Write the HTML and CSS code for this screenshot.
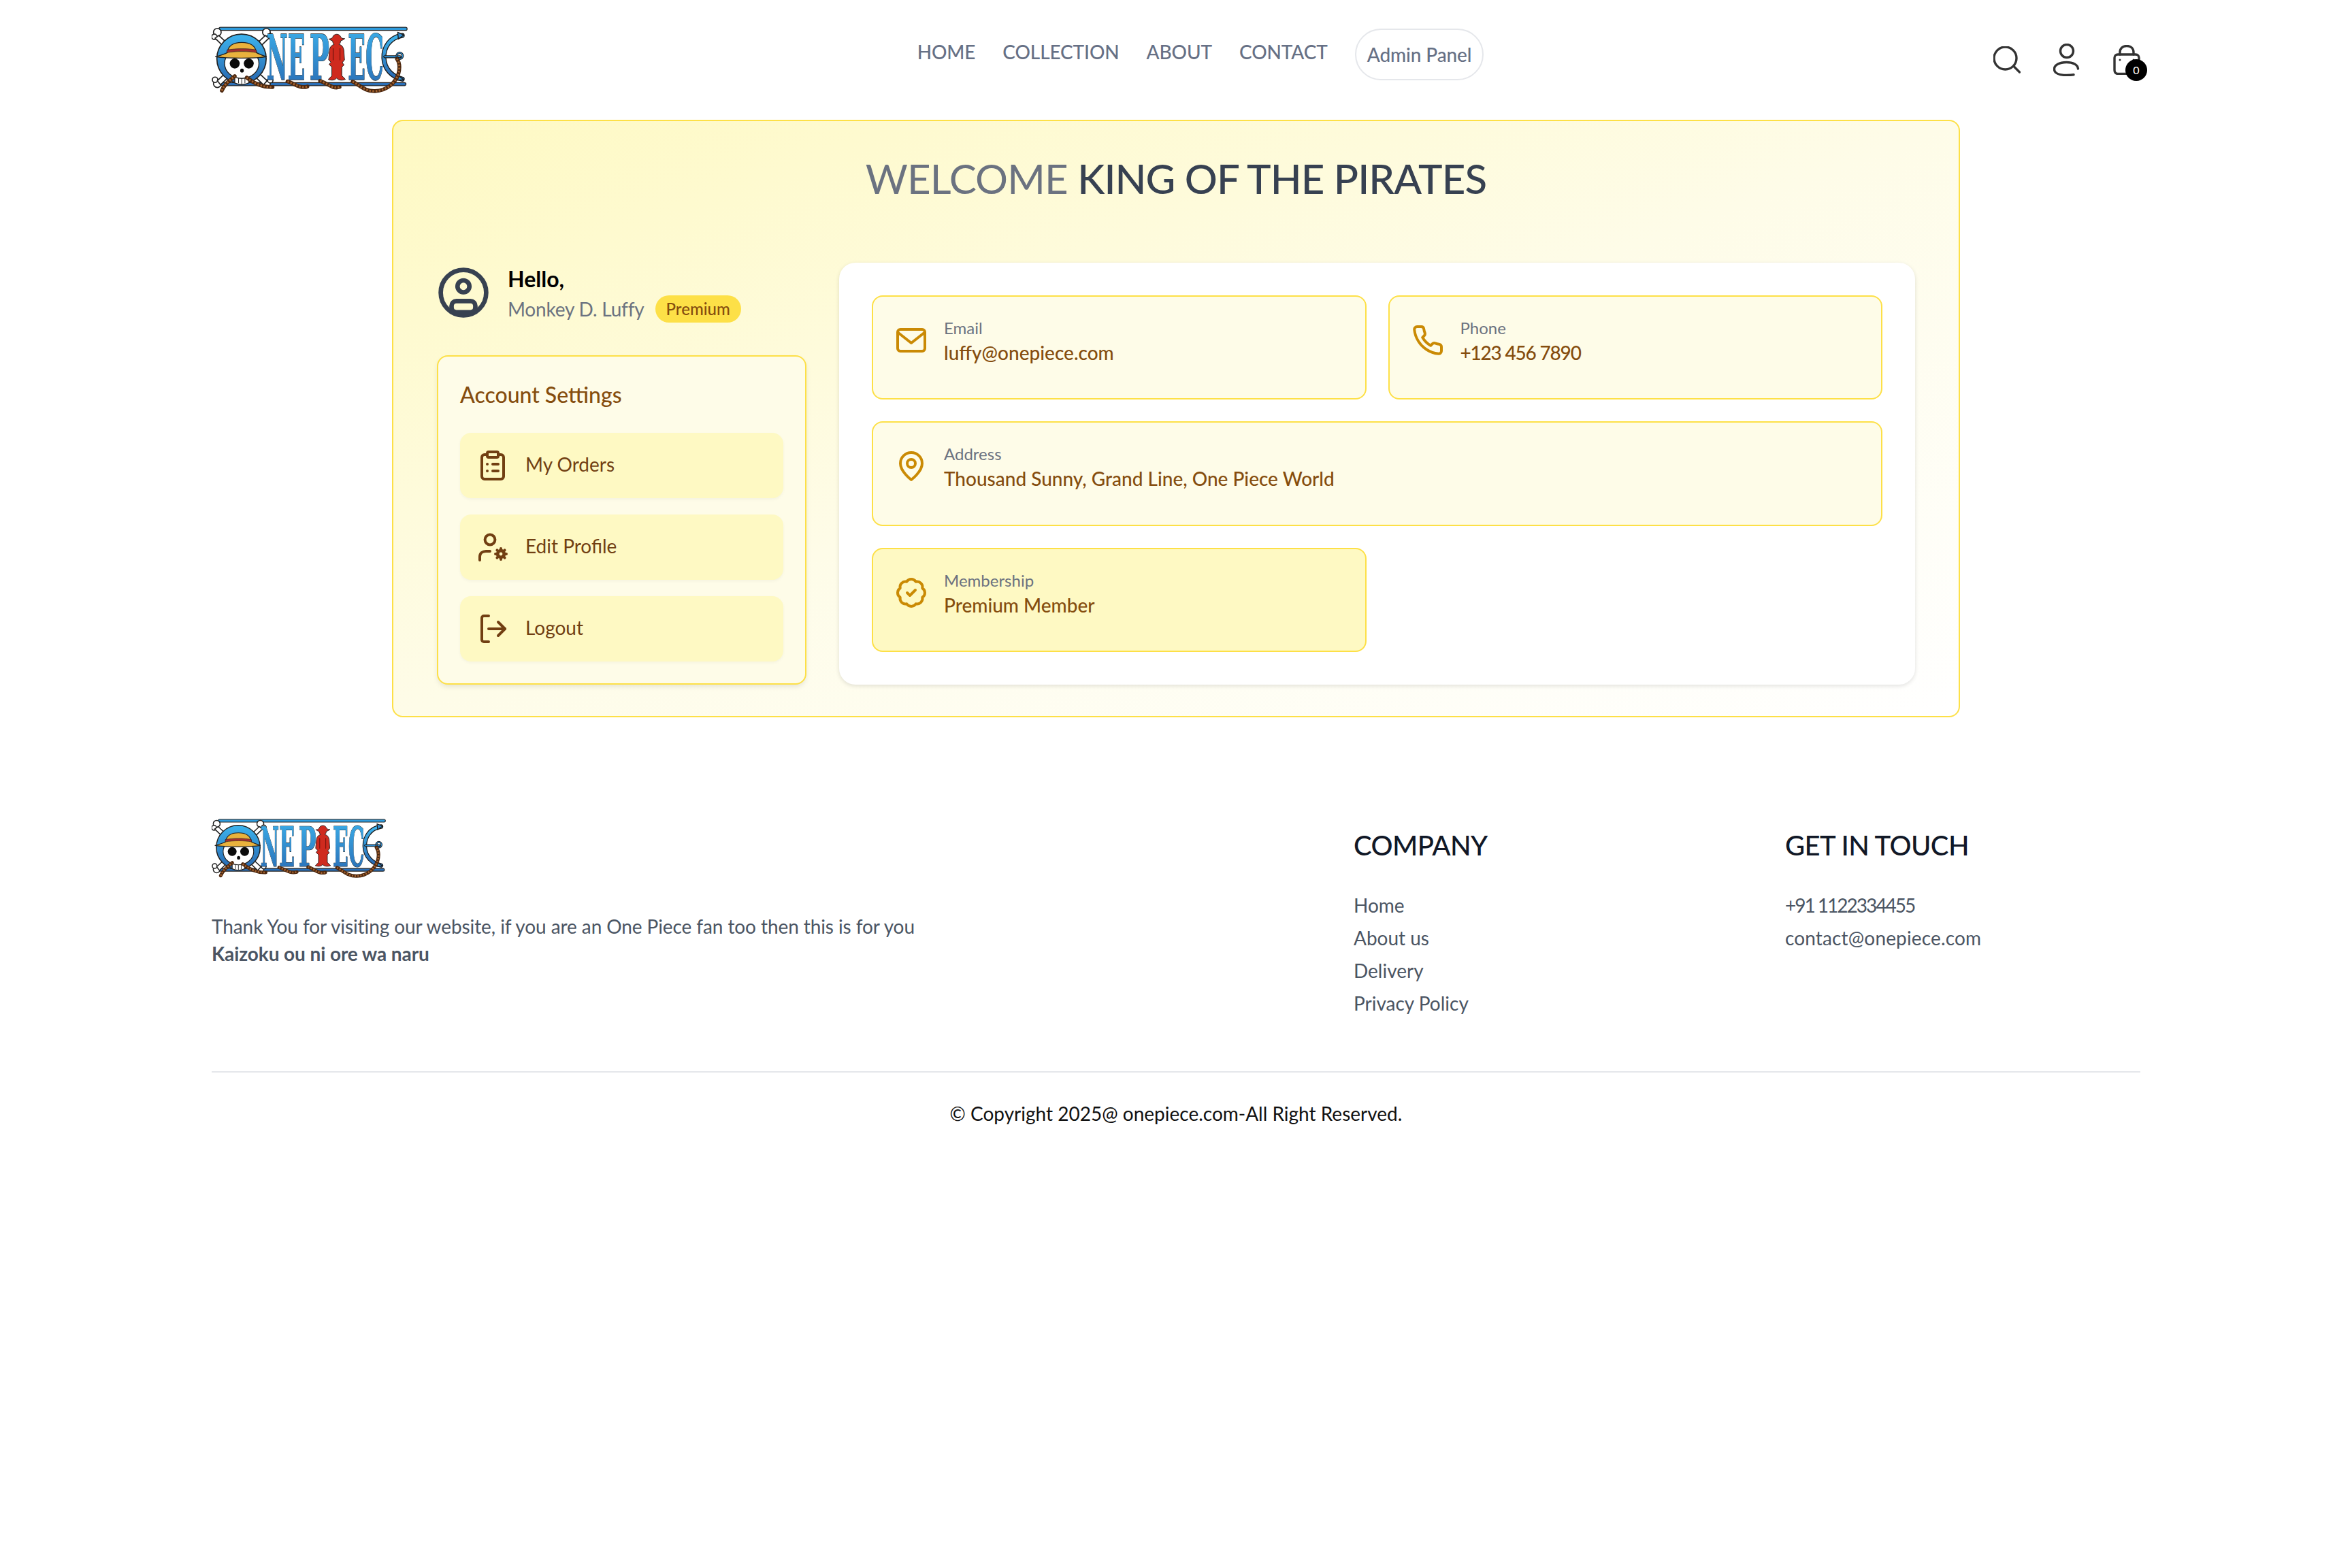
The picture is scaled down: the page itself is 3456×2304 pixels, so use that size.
FILE: index.html
```html
<!DOCTYPE html>
<html lang="en">
<head>
<meta charset="utf-8">
<title>One Piece</title>
<link rel="stylesheet" href="styles.css">
</head>
<body>
<svg class="defs" aria-hidden="true">
  <defs>
    <linearGradient id="blue" x1="0" y1="0" x2="0" y2="1"><stop offset="0" stop-color="#3db4ee"/><stop offset="1" stop-color="#2867b0"/></linearGradient>
    <symbol id="logo" viewBox="93 50 866 300">
      <g stroke-linecap="round" stroke-linejoin="round">
        <path d="M132 63H950" stroke="#222" stroke-width="17" fill="none"/>
        <path d="M132 63H950" stroke="#2f9bdc" stroke-width="10" fill="none"/>
        <path d="M138 307H945" stroke="#222" stroke-width="17" fill="none"/>
        <path d="M138 307H945" stroke="#2a6fb8" stroke-width="10" fill="none"/>
        <g fill="#fff" stroke="#222" stroke-width="5">
          <circle cx="118" cy="78" r="17"/><circle cx="105" cy="98" r="12"/>
          <circle cx="335" cy="78" r="17"/><circle cx="352" cy="96" r="12"/>
          <circle cx="118" cy="305" r="17"/><circle cx="108" cy="288" r="12"/>
          <circle cx="335" cy="305" r="17"/><circle cx="352" cy="290" r="12"/>
          <path d="M125 92 338 292 322 310 108 104Z"/>
          <path d="M330 92 118 292 132 310 346 104Z"/>
        </g>
        <circle cx="225" cy="195" r="109" fill="url(#blue)" stroke="#222" stroke-width="5"/>
        <path d="M195 272h62v30q-31 14-62 0Z" fill="#fff" stroke="#222" stroke-width="4"/>
        <path d="M212 276v26M226 276v30M240 276v26" stroke="#222" stroke-width="3" fill="none"/>
        <ellipse cx="226" cy="216" rx="76" ry="66" fill="#fff" stroke="#222" stroke-width="4"/>
        <circle cx="195" cy="216" r="22" fill="#0b0b0b"/>
        <circle cx="257" cy="216" r="22" fill="#0b0b0b"/>
        <ellipse cx="227" cy="247" rx="8" ry="9" fill="#0b0b0b"/>
        <path d="M162 168C166 135 188 123 226 123S286 135 291 168C305 176 320 181 335 186 290 194 160 194 110 186 128 181 148 176 162 168Z" fill="#e9b23d" stroke="#222" stroke-width="4"/>
        <path d="M162 156C200 149 255 149 290 156L292 168C255 161 200 161 161 168Z" fill="#a5302f" stroke="#222" stroke-width="2"/>
        <g font-family="'DejaVu Serif','Liberation Serif',serif" font-weight="700" font-size="274" fill="url(#blue)" stroke="#1a1a1a" stroke-width="4" paint-order="stroke">
          <text x="336" y="288" textLength="170" lengthAdjust="spacingAndGlyphs">NE</text>
          <text x="525" y="288" textLength="88" lengthAdjust="spacingAndGlyphs">P</text>
          <text x="695" y="288" textLength="158" lengthAdjust="spacingAndGlyphs">EC</text>
        </g>
        <path d="M612 108C622 106 628 104 630 94 640 84 652 84 661 94 664 104 670 106 681 106 674 112 668 114 663 116 662 124 660 128 656 132 668 134 674 142 677 156L680 200 670 212 678 222 668 232V270C674 276 680 280 684 286 670 292 650 290 645 280 640 290 622 292 608 286 614 280 620 276 624 270V232L612 220 620 210 610 200 614 156C616 142 624 134 634 132 630 128 628 122 627 116 622 114 616 112 612 108Z" fill="#cf2a1e" stroke="#222" stroke-width="3"/>
        <path d="M630 150V200M660 150V200" stroke="#7a1710" stroke-width="4" fill="none"/>
        <path d="M935 92C880 100 852 145 854 192 856 240 890 275 935 285" fill="none" stroke="#1a1a1a" stroke-width="22"/>
        <path d="M935 92C880 100 852 145 854 192 856 240 890 275 935 285" fill="none" stroke="url(#blue)" stroke-width="14"/>
        <path d="M915 78 942 90 918 108ZM918 270 942 288 915 290Z" fill="#2f8fd4" stroke="#1a1a1a" stroke-width="4"/>
        <path d="M858 186H925" stroke="#1a1a1a" stroke-width="13" fill="none"/>
        <path d="M858 186H925" stroke="#2f8fd4" stroke-width="6" fill="none"/>
        <circle cx="924" cy="182" r="13" fill="none" stroke="#1a1a1a" stroke-width="10"/>
        <circle cx="924" cy="182" r="13" fill="none" stroke="#2f8fd4" stroke-width="4"/>
        <g fill="none">
          <path d="M138 336C150 305 175 290 195 272M248 278C275 300 315 322 362 320M428 295C455 302 480 328 516 318M572 293C600 300 625 330 658 320M716 296C745 310 770 340 815 338 870 335 905 300 918 262 924 240 925 215 912 196" stroke="#4c2810" stroke-width="17"/>
          <path d="M138 336C150 305 175 290 195 272M248 278C275 300 315 322 362 320M428 295C455 302 480 328 516 318M572 293C600 300 625 330 658 320M716 296C745 310 770 340 815 338 870 335 905 300 918 262 924 240 925 215 912 196" stroke="#a4622e" stroke-width="9" stroke-dasharray="7 7" stroke-linecap="butt"/>
        </g>
      </g>
    </symbol>
  </defs>
</svg>

<div class="page">
  <header class="header">
    <svg class="logo-main"><use href="#logo"/></svg>
    <nav class="nav">
      <a class="nav-link">HOME</a>
      <a class="nav-link">COLLECTION</a>
      <a class="nav-link">ABOUT</a>
      <a class="nav-link">CONTACT</a>
      <a class="nav-pill">Admin Panel</a>
    </nav>
    <div class="header-icons">
      <svg class="hicon" viewBox="0 0 40 40"><circle cx="17.5" cy="17.5" r="16.5"/><path d="M30 29.5 38.5 38"/></svg>
      <svg class="hicon hicon-user" viewBox="0 0 40 48"><circle cx="20" cy="11" r="9.5"/><path d="M36.5 37C36 31 29 27.500 19.500 27.500 9 27.500 1.500 31.500 1.500 37.500S9 46.500 19.500 46.500C24 46.500 27 46.300 30 45.800"/></svg>
      <div class="cart">
        <svg class="hicon hicon-bag" viewBox="0 0 40 44"><path d="M10 14V11C10 5 14 1.500 20 1.500S30 5 30 11V14"/><path d="M7 14H33C36 14 38 16 38 19V37C38 40.500 36 42.500 33 42.500H7C4 42.500 2 40.500 2 37V19C2 16 4 14 7 14Z"/><circle class="dot" cx="10" cy="22" r="1.500"/><circle class="dot" cx="30" cy="22" r="1.500"/></svg>
        <span class="cart-badge">0</span>
      </div>
    </div>
  </header>

  <main class="hero">
    <h1 class="hero-title"><span class="hero-light">WELCOME </span><span class="hero-strong">KING OF THE PIRATES</span></h1>
    <div class="hero-body">
      <aside class="side">
        <div class="hello">
          <svg class="hello-icon" viewBox="0 0 72 72"><circle cx="36" cy="36" r="32.500"/><circle cx="36" cy="27" r="8.500"/><rect x="19" y="48" width="34" height="16" rx="7"/></svg>
          <div class="hello-text">
            <div class="hello-title">Hello,</div>
            <div class="hello-sub"><span class="hello-name">Monkey D. Luffy</span><span class="badge">Premium</span></div>
          </div>
        </div>
        <section class="settings">
          <h2 class="settings-title">Account Settings</h2>
          <a class="settings-item">
            <svg class="item-icon" viewBox="0 0 24 24"><rect x="8" y="2" width="8" height="4" rx="1"/><path d="M16 4h2a2 2 0 0 1 2 2v14a2 2 0 0 1-2 2H6a2 2 0 0 1-2-2V6a2 2 0 0 1 2-2h2"/><path d="M12 11h4M12 16h4M8 11h.01M8 16h.01"/></svg>
            <span>My Orders</span>
          </a>
          <a class="settings-item">
            <svg class="item-icon" viewBox="0 0 24 24"><circle cx="10" cy="6.500" r="3.700"/><path d="M2.500 21.500V19C2.500 16.500 4.500 15 7 15H10"/><circle cx="18" cy="17" r="2.400" stroke-width="2.400"/><path d="M18 13V14M18 20V21M14 17H15M21 17H22M15.200 14.200 15.900 14.900M20.100 19.100 20.800 19.800M15.200 19.800 15.900 19.100M20.100 14.900 20.800 14.200" stroke-width="2"/></svg>
            <span>Edit Profile</span>
          </a>
          <a class="settings-item">
            <svg class="item-icon" viewBox="0 0 24 24"><path d="M9 21.500H5.500a1.500 1.500 0 0 1-1.500-1.500V4a1.500 1.500 0 0 1 1.500-1.500H9"/><path d="M16 17l5-5-5-5"/><path d="M21 12H9"/></svg>
            <span>Logout</span>
          </a>
        </section>
      </aside>

      <section class="details">
        <div class="info">
          <svg class="info-icon" viewBox="0 0 24 24"><rect x="2" y="4" width="20" height="16" rx="2"/><path d="M2.500 6.500 12 14l9.500-7.500"/></svg>
          <div><div class="info-label">Email</div><div class="info-value">luffy@onepiece.com</div></div>
        </div>
        <div class="info">
          <svg class="info-icon" viewBox="0 0 24 24"><path d="M22 16.920v3a2 2 0 0 1-2.180 2 19.790 19.790 0 0 1-8.630-3.070 19.500 19.500 0 0 1-6-6 19.790 19.790 0 0 1-3.070-8.670A2 2 0 0 1 4.110 2h3a2 2 0 0 1 2 1.720 12.840 12.840 0 0 0 .7 2.810 2 2 0 0 1-.45 2.110L8.090 9.910a16 16 0 0 0 6 6l1.270-1.270a2 2 0 0 1 2.110-.45 12.840 12.840 0 0 0 2.810.7A2 2 0 0 1 22 16.920z"/></svg>
          <div><div class="info-label">Phone</div><div class="info-value info-digits">+123 456 7890</div></div>
        </div>
        <div class="info info-wide">
          <svg class="info-icon" viewBox="0 0 24 24"><path d="M20 10c0 6-8 12-8 12s-8-6-8-12a8 8 0 0 1 16 0Z"/><circle cx="12" cy="10" r="3"/></svg>
          <div><div class="info-label">Address</div><div class="info-value">Thousand Sunny, Grand Line, One Piece World</div></div>
        </div>
        <div class="info info-strong">
          <svg class="info-icon" viewBox="0 0 24 24"><path d="M3.850 8.620a4 4 0 0 1 4.780-4.770 4 4 0 0 1 6.740 0 4 4 0 0 1 4.780 4.780 4 4 0 0 1 0 6.740 4 4 0 0 1-4.770 4.780 4 4 0 0 1-6.750 0 4 4 0 0 1-4.780-4.770 4 4 0 0 1 0-6.760Z"/><path d="m9 12 2 2 4-4"/></svg>
          <div><div class="info-label">Membership</div><div class="info-value">Premium Member</div></div>
        </div>
      </section>
    </div>
  </main>

  <footer class="footer">
    <div class="footer-grid">
      <div>
        <svg class="logo-foot"><use href="#logo"/></svg>
        <p class="footer-text">Thank You for visiting our website, if you are an One Piece fan too then this is for you<br><b>Kaizoku ou ni ore wa naru</b></p>
      </div>
      <div class="footer-col">
        <h3 class="footer-head">COMPANY</h3>
        <ul class="footer-list"><li>Home</li><li>About us</li><li>Delivery</li><li>Privacy Policy</li></ul>
      </div>
      <div class="footer-col">
        <h3 class="footer-head">GET IN TOUCH</h3>
        <ul class="footer-list"><li class="footer-phone">+91 1122334455</li><li class="footer-mail">contact@onepiece.com</li></ul>
      </div>
    </div>
    <p class="copyright">© Copyright 2025@ onepiece.com-All Right Reserved.</p>
  </footer>
</div>
</body>
</html>
```
FILE: styles.css
```css
* { box-sizing: border-box; margin: 0; padding: 0; }
html, body { background: #fff; }
body { font-family: "Lato", "Liberation Sans", sans-serif; font-size: 28px; line-height: 40px; color: #374151; }
.defs { width: 0; height: 0; display: block; overflow: hidden; }
.page { padding: 0 9vw; }

.header { height: 176px; display: flex; align-items: center; justify-content: space-between; }
.logo-main { width: 288px; height: 100px; display: block; }
.logo-foot { width: 256px; height: 89px; display: block; }
.nav { display: flex; align-items: center; gap: 40px; margin-bottom: 16px; color: #667085; font-weight: 500; letter-spacing: -0.12px; }
.nav-link { display: block; padding-bottom: 8px; }
.nav-pill { display: block; padding: 16px; border: 2px solid #e5e7eb; border-radius: 999px; height: 76px; }
.header-icons { display: flex; align-items: center; gap: 48px; }
.hicon { width: 40px; height: 40px; display: block; fill: none; stroke: #333; stroke-width: 3.4; stroke-linecap: round; stroke-linejoin: round; }
.hicon-user { height: 48px; }
.hicon-bag { height: 44px; }
.hicon .dot { fill: #333; stroke: none; }
.cart { position: relative; }
.cart-badge { position: absolute; right: -10px; bottom: -9px; width: 32px; height: 32px; border-radius: 50%; background: #000; color: #fff; font-size: 16px; line-height: 32px; text-align: center; }

.hero { width: 2304px; margin: 0 auto; padding: 48px 64px 46px; border: 2px solid #fde047; border-radius: 16px; background: linear-gradient(to bottom right, #fef9c3, #fefce8 50%, #fff); }
.hero-title { font-size: 60px; line-height: 72px; font-weight: 400; text-align: center; margin-bottom: 88px; letter-spacing: -0.9px; }
.hero-light { color: #6b7280; }
.hero-strong { color: #374151; font-weight: 500; }
.hero-body { display: flex; gap: 48px; align-items: stretch; }

.side { width: 543px; flex: none; }
.hello { display: flex; align-items: center; gap: 28px; margin-bottom: 48px; height: 88px; padding-left: 2px; }
.hello-icon { width: 74px; height: 74px; flex: none; fill: none; stroke: #374151; stroke-width: 6.5; stroke-linecap: round; stroke-linejoin: round; }
.hello-title { font-size: 32px; line-height: 48px; font-weight: 700; color: #000; }
.hello-sub { display: flex; align-items: center; gap: 16px; height: 40px; }
.hello-name { color: #6b7280; letter-spacing: -0.2px; }
.badge { padding: 0 16px; height: 40px; line-height: 40px; font-size: 24px; font-weight: 500; color: #854d0e; background: #fde047; border-radius: 999px; }

.settings { padding: 32px; border: 2px solid #fde047; border-radius: 16px; background: #fefce8; box-shadow: 0 4px 8px -2px rgba(0,0,0,.12); display: flex; flex-direction: column; gap: 24px; }
.settings-title { font-size: 32px; line-height: 48px; font-weight: 500; color: #854d0e; margin-bottom: 8px; }
.settings-item { display: flex; align-items: center; gap: 24px; padding: 24px; background: #fef9c3; border-radius: 16px; color: #713f12; box-shadow: 0 2px 4px rgba(0,0,0,.04); }
.settings-item span { line-height: 36px; padding-bottom: 4px; }
.item-icon { width: 48px; height: 48px; flex: none; fill: none; stroke: #713f12; stroke-width: 2; stroke-linecap: round; stroke-linejoin: round; }

.details { flex: 1; min-width: 0; padding: 48px; background: #fff; border-radius: 24px; box-shadow: 0 2px 6px rgba(0,0,0,.12); display: grid; grid-template-columns: 1fr 1fr; grid-auto-rows: 1fr; gap: 32px; }
.info { display: flex; align-items: flex-start; gap: 24px; padding: 32px; border: 2px solid #fde047; border-radius: 16px; background: #fefce8; }
.info-wide { grid-column: span 2; }
.info-strong { background: #fef9c3; }
.info-icon { width: 48px; height: 48px; flex: none; margin-top: 8px; fill: none; stroke: #ca8a04; stroke-width: 2; stroke-linecap: round; stroke-linejoin: round; }
.info-label { font-size: 24px; line-height: 28px; margin-bottom: 4px; color: #6b7280; }
.info-value { line-height: 36px; font-weight: 500; color: #854d0e; }
.info-digits { letter-spacing: -1.2px; }

.footer { margin-top: 148px; }
.footer-grid { display: grid; grid-template-columns: 3fr 1fr 1fr; gap: 112px; margin-bottom: 80px; color: #4b5563; }
.footer-text { margin-top: 50px; width: 1060px; letter-spacing: -0.09px; }
.footer-col { padding-top: 12px; }
.footer-head { font-size: 40px; line-height: 56px; font-weight: 500; color: #111827; margin-bottom: 40px; letter-spacing: -0.6px; }
.footer-list { list-style: none; display: flex; flex-direction: column; gap: 8px; }
.footer-phone { letter-spacing: -2px; }
.footer-mail { letter-spacing: 0.15px; }
.copyright { border-top: 2px solid #e5e7eb; padding: 40px 0; text-align: center; color: #111; }
```
